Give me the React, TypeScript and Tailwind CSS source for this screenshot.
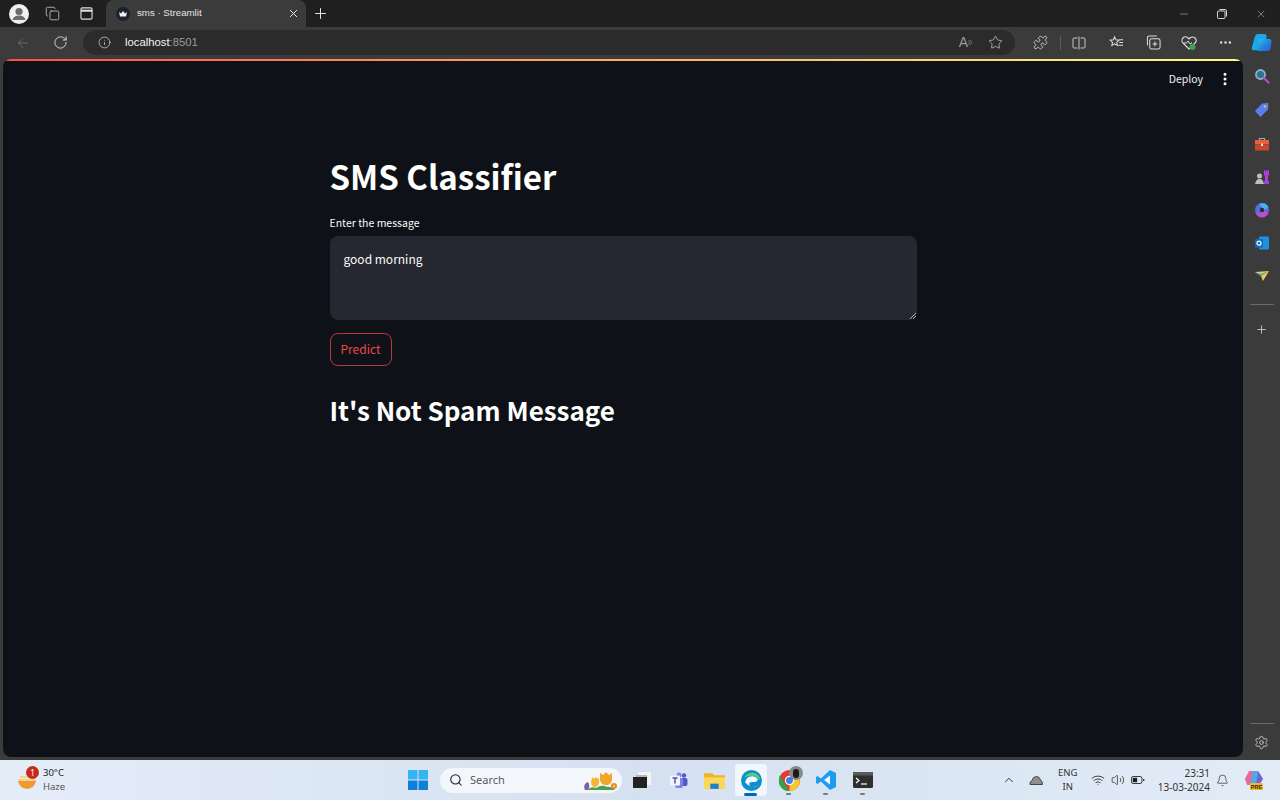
import {
  ArrowLeft,
  Bell,
  ChevronUp,
  Copy,
  Ellipsis,
  EllipsisVertical,
  Info,
  Minus,
  Plus,
  Puzzle,
  RotateCw,
  Search,
  Settings,
  Star,
  Volume2,
  Wifi,
  X,
} from 'lucide-react';

const streamlitFont = '[font-family:"Noto_Sans_CJK_SC","Source_Sans_Pro",sans-serif]';

function TabBar() {
  return (
    <div className="h-[27px] flex items-end bg-[#1f1f1f] text-[#e6e6e6]">
      <div className="h-[27px] w-[106px] flex items-center shrink-0">
        <div className="ml-[9px] w-5 h-5 rounded-full bg-[#f0f0f0] flex items-center justify-center overflow-hidden">
          <svg viewBox="0 0 20 20" className="w-5 h-5">
            <circle cx="10" cy="7.5" r="3.6" fill="#6b6b6b" />
            <path d="M3.5 16c1-3.6 3.6-4.6 6.5-4.6s5.500 1 6.500 4.600z" fill="#6b6b6b" />
          </svg>
        </div>
        <Copy className="ml-[16px] w-[15px] h-[15px] text-[#c8c8c8]" strokeWidth={1.3} />
        <svg viewBox="0 0 14 14" className="ml-[20px] w-[13px] h-[13px]" fill="none" stroke="#e0e0e0" strokeWidth="1.2">
          <rect x="1" y="1" width="12" height="12" rx="1.5" />
          <path d="M1 4h12" strokeWidth="2.200" />
        </svg>
      </div>
      <div className="h-[27px] w-[200px] bg-[#3b3b3b] rounded-t-lg flex items-center shrink-0">
        <div className="ml-[10px] w-[14px] h-[14px] rounded-full bg-[#1c2230] flex items-center justify-center">
          <svg viewBox="0 0 10 10" className="w-[10px] h-[10px]">
            <path d="M1 3l2 1.500L5 2l2 2.500L9 3 8 7.500H2z" fill="#f2f2f2" />
          </svg>
        </div>
        <span className="ml-[7px] flex-1 text-[9.7px] font-['Liberation_Sans',sans-serif]">sms · Streamlit</span>
        <X className="mr-[6px] w-[13px] h-[13px]" strokeWidth={1.800} />
      </div>
      <div className="h-[27px] flex items-center ml-[6px]">
        <Plus className="w-[17px] h-[17px]" strokeWidth={1.400} />
      </div>
      <div className="flex-1 h-[27px] flex items-center justify-end text-[#d8d8d8]">
        <Minus className="mr-[27px] w-[12px] h-[12px]" strokeWidth={1} />
        <svg viewBox="0 0 10 10" className="mr-[28px] w-[10px] h-[10px]" fill="none" stroke="#d8d8d8" strokeWidth="1">
          <rect x="0.500" y="2" width="7.500" height="7.500" rx="1" />
          <path d="M2.500 0.500h5.500a1.500 1.500 0 0 1 1.500 1.500v5.500" />
        </svg>
        <X className="mr-[13px] w-[12px] h-[12px]" strokeWidth={1} />
      </div>
    </div>
  );
}

function AddressBar() {
  return (
    <div className="h-[32px] pb-px flex items-center bg-[#3b3b3b] text-[#dcdcdc]">
      <ArrowLeft className="ml-[15px] w-[16px] h-[16px] text-[#6f6f6f]" strokeWidth={1.300} />
      <RotateCw className="ml-[22px] w-[15px] h-[15px]" strokeWidth={1.500} />
      <div className="ml-[15px] w-[932px] h-[25px] rounded-full bg-[#2b2b2b] flex items-center shrink-0">
        <Info className="ml-[15px] w-[13px] h-[13px]" strokeWidth={1.300} />
        <span className="ml-[14px] flex-1 text-[11.3px] font-['Liberation_Sans',sans-serif] text-[#f4f4f4]">
          localhost<span className="text-[#9a9a9a]">:8501</span>
        </span>
        <span className="mr-[2px] text-[14px] text-[#9b9b9b] font-['Liberation_Sans',sans-serif]">
          A<sup className="text-[6px]">))</sup>
        </span>
        <Star className="ml-[14px] mr-[12px] w-[15px] h-[15px] text-[#c8c8c8]" strokeWidth={1.200} />
      </div>
      <Puzzle className="ml-[18px] w-[15px] h-[15px]" strokeWidth={1.300} />
      <div className="ml-[12px] w-px h-[14px] bg-[#5c5c5c]" />
      <svg viewBox="0 0 14 14" className="ml-[11px] w-[14px] h-[14px]" fill="none" stroke="#c8c8c8" strokeWidth="1">
        <path d="M5.500 2H2a1 1 0 0 0-1 1v8a1 1 0 0 0 1 1h3.500M8.500 2H12a1 1 0 0 1 1 1v8a1 1 0 0 1-1 1H8.500M7 0.500v13" />
      </svg>
      <svg viewBox="0 0 16 16" className="ml-[23px] w-[15px] h-[15px]" fill="none" stroke="#dcdcdc" strokeWidth="1.100">
        <path d="M6 2l1.400 3.200 3.400.300-2.600 2.300.800 3.400L6 9.400 3 11.200l.800-3.400L1.200 5.500l3.400-.300zM11 5h4M11 8h4M10 11h5" />
      </svg>
      <svg viewBox="0 0 16 16" className="ml-[22px] w-[15px] h-[15px]" fill="none" stroke="#dcdcdc" strokeWidth="1.100">
        <rect x="4" y="4" width="11" height="11" rx="2" />
        <path d="M1.500 11V3a2 2 0 0 1 2-2h8M9.500 7v5M7 9.500h5" />
      </svg>
      <svg viewBox="0 0 16 16" className="ml-[20px] w-[16px] h-[16px]" fill="none">
        <path d="M8 14L2 8a3.500 3.500 0 0 1 5-5l1 1 1-1a3.500 3.500 0 0 1 5 5z" stroke="#dcdcdc" strokeWidth="1.100" />
        <path d="M3 8h2.500l1.500-2 2 3 1-1h1" stroke="#dcdcdc" strokeWidth="1" />
        <circle cx="11.500" cy="12" r="3" fill="#3fa34d" />
      </svg>
      <Ellipsis className="ml-[21px] w-[15px] h-[15px]" strokeWidth={2} />
      <svg viewBox="0 0 22 22" className="ml-[18px] w-[21px] h-[21px]">
        <defs>
          <linearGradient id="cop" x1="0" y1="0" x2="1" y2="1">
            <stop offset="0" stopColor="#35c1f1" />
            <stop offset="0.600" stopColor="#1f7fe0" />
            <stop offset="1" stopColor="#2a5fd8" />
          </linearGradient>
        </defs>
        <path d="M7 2h7q2 0 2.500 2l-3 12q-1 3-4 3H3q-3 0-2-3L4 5q.800-3 3-3z" fill="#1aa9e8" />
        <path d="M10 7h8q4 0 3.500 4l-1 6q-.800 3-4 3H9q-3 0-2.500-3l1-8q.500-2 2.500-2z" fill="url(#cop)" />
      </svg>
    </div>
  );
}

function SidebarIcons() {
  return (
    <div className="w-[37px] shrink-0 flex flex-col items-center bg-[#3b3b3b] text-[#d4d4d4]">
      <svg viewBox="0 0 16 16" className="mt-[9px] w-[16px] h-[16px]" fill="none">
        <circle cx="6.500" cy="6.500" r="4.500" stroke="#8fb4c8" strokeWidth="1.800" fill="#2f6f95" />
        <path d="M10 10l4.500 4.500" stroke="#b54bd6" strokeWidth="2.200" strokeLinecap="round" />
      </svg>
      <svg viewBox="0 0 16 16" className="mt-[18px] w-[16px] h-[16px]">
        <path d="M1 9l7-7.500 6.500-.500-.500 6.500L6.500 15z" fill="#5c7df0" />
        <circle cx="11" cy="4.500" r="1.300" fill="#d9c94a" />
      </svg>
      <svg viewBox="0 0 16 16" className="mt-[18px] w-[16px] h-[16px]">
        <path d="M5.500 4V2.500h5V4" fill="none" stroke="#a8a8a8" strokeWidth="1.200" />
        <rect x="1" y="4" width="14" height="4.500" fill="#e8603a" />
        <rect x="1" y="9" width="14" height="5.500" fill="#c9472a" />
        <rect x="7" y="7.500" width="2" height="2.500" fill="#f4d9c8" />
      </svg>
      <svg viewBox="0 0 16 16" className="mt-[17px] w-[16px] h-[16px]">
        <circle cx="5.500" cy="7" r="2.500" fill="#bdbdbd" />
        <path d="M1 15q0-3 3-5h3q3 2 3 5z" fill="#bdbdbd" />
        <path d="M10 1h1v1h1V1h1v1h1V1h1v5l-1 1v5h1v3H10v-3h1V7l-1-1z" fill="#a83fd8" />
      </svg>
      <svg viewBox="0 0 16 16" className="mt-[17px] w-[16px] h-[16px]">
        <circle cx="8" cy="8" r="7" fill="#5a6de0" />
        <path d="M8 1a7 7 0 0 1 6.500 4.500L10 8 5 2z" fill="#3fb4e8" />
        <path d="M2 12a7 7 0 0 0 12 0l-3-4-5 3z" fill="#b84fd0" />
        <circle cx="8" cy="8" r="2.300" fill="#2c2c4a" />
      </svg>
      <svg viewBox="0 0 16 16" className="mt-[17px] w-[16px] h-[16px]">
        <rect x="5" y="1.500" width="10" height="13" rx="1" fill="#1f8fe0" />
        <rect x="1" y="4" width="8" height="8.500" rx="1" fill="#0f6cbd" />
        <circle cx="5" cy="8.200" r="2" fill="none" stroke="#fff" strokeWidth="1.200" />
      </svg>
      <svg viewBox="0 0 16 16" className="mt-[17px] w-[16px] h-[16px]">
        <path d="M1 4l14-1-6 10-2-5z" fill="#f2c94c" />
        <path d="M1 4l6 4 8-5-8 3z" fill="#36a3c9" />
      </svg>
      <div className="mt-[20px] w-[24px] h-px bg-[#6a6a6a]" />
      <Plus className="mt-[18px] w-[13px] h-[13px]" strokeWidth={1.500} />
      <div className="mt-auto w-[24px] h-px bg-[#6a6a6a]" />
      <Settings className="mt-[11px] mb-[10px] w-[15px] h-[15px]" strokeWidth={1.300} />
    </div>
  );
}

function StreamlitPage() {
  return (
    <div className={`flex-1 flex flex-col ml-[3px] mb-[3px] rounded-lg overflow-hidden bg-[#0e1117] text-white ${streamlitFont}`}>
      <div className="h-[2px] bg-gradient-to-r from-[#ff4b4b] to-[#fffd80] shrink-0" />
      <div className="h-[36px] flex items-center justify-end shrink-0">
        <span className="text-[10.5px] text-[#f0f2f6]">Deploy</span>
        <EllipsisVertical className="ml-[14px] mr-[10px] w-[16px] h-[16px]" strokeWidth={2.500} />
      </div>
      <div className="w-[587px] mx-auto pt-[57px]">
        <h1 className="text-[33px] leading-[44px] font-bold">SMS Classifier</h1>
        <label className="block mt-[16px] text-[10.5px] leading-[18px] text-[#fafafa]">Enter the message</label>
        <div className="mt-[4px] relative h-[84px] rounded-lg bg-[#262730] px-[14px] pt-[12px] text-[12px] leading-[22px] text-[#fafafa]">
          good morning
          <svg viewBox="0 0 6 6" className="absolute right-px bottom-px w-[6px] h-[6px]" stroke="#b0b0b0" strokeWidth="1">
            <path d="M0 6L6 0M3 6l3-3" />
          </svg>
        </div>
        <button className="mt-[13px] block w-[62px] h-[33px] pb-[2px] rounded-lg border border-[#ff4b4b]/70 text-[12px] text-[#f04848]">
          Predict
        </button>
        <h2 className="mt-[26px] text-[26px] leading-[36px] font-semibold">It's Not Spam Message</h2>
      </div>
    </div>
  );
}

function TaskbarApps() {
  return (
    <div className="flex items-center">
      <svg viewBox="0 0 20 20" className="w-[20px] h-[20px]">
        <rect x="0" y="0" width="9.500" height="9.500" fill="#35b5f0" />
        <rect x="10.500" y="0" width="9.500" height="9.500" fill="#35b5f0" />
        <rect x="0" y="10.500" width="9.500" height="9.500" fill="#0f7fd8" />
        <rect x="10.500" y="10.500" width="9.500" height="9.500" fill="#0f7fd8" />
      </svg>
      <div className="ml-[12px] w-[182px] h-[25px] rounded-full bg-[#f3f7fc] flex items-center">
        <Search className="ml-[9px] w-[14px] h-[14px] text-[#1b1b1b]" strokeWidth={1.800} />
        <span className="ml-[7px] flex-1 text-[11px] text-[#5a5a5a] font-['Noto_Sans',sans-serif]">Search</span>
        <svg viewBox="0 0 40 22" className="w-[40px] h-[22px] mr-px">
          <path d="M4 21q-2-4 1-7l2-1 1 2q1 3-1 6z" fill="#7a5ea8" />
          <path d="M11 8l2 2 2-2 2 2 1-1v5q-1 4-4 4t-4-4z" fill="#f2b632" />
          <path d="M19 4l3 2 3-3 3 3 3-2v7q-1 5-6 5t-6-5z" fill="#f4a62a" />
          <path d="M6 21q4-4 9-2 6-4 11-1 4-1 8 3z" fill="#4f9e4a" />
          <circle cx="33" cy="17" r="3" fill="#e88a2a" />
          <circle cx="33" cy="17" r="1" fill="#f7e27a" />
        </svg>
      </div>
      <svg viewBox="0 0 20 20" className="ml-[10px] w-[20px] h-[20px]">
        <rect x="6" y="2" width="13" height="13" fill="#f4f4f4" />
        <rect x="4" y="5" width="11" height="11" fill="#b8b8b8" />
        <rect x="1" y="7" width="14" height="11" fill="#222222" />
      </svg>
      <svg viewBox="0 0 20 20" className="ml-[17px] w-[20px] h-[20px]">
        <circle cx="15" cy="5.500" r="2.200" fill="#5059c9" />
        <rect x="12" y="8" width="6.500" height="8" rx="2" fill="#5059c9" />
        <circle cx="10" cy="5" r="2.500" fill="#7b83eb" />
        <rect x="6" y="8" width="8" height="10" rx="2" fill="#7b83eb" />
        <rect x="1" y="5.500" width="10" height="10" rx="1" fill="#f5f5f5" />
        <path d="M3.500 8h5M6 8v5.500" stroke="#4b53bc" strokeWidth="1.500" />
      </svg>
      <svg viewBox="0 0 20 20" className="ml-[15px] w-[21px] h-[21px]">
        <path d="M0 3h8l2 2h10v13H0z" fill="#f0b429" />
        <path d="M0 7h20v11H0z" fill="#fbd75b" />
        <rect x="6" y="13" width="8" height="5" fill="#1f7fd0" />
      </svg>
      <div className="ml-[10px] w-[32px] h-[32px] rounded bg-[#f2f7fd] relative flex items-center justify-center">
        <svg viewBox="0 0 20 20" className="w-[21px] h-[21px]">
          <circle cx="10" cy="10" r="10" fill="#0f8fd0" />
          <path d="M4 12a6.500 6.500 0 0 1 12-3c0 2-2 2.500-4.500 2.500-3 0-4.500 1-3 3.500 1 1.500 5 1.500 8-.500A9.500 9.500 0 0 1 4 12z" fill="#f4f9fd" />
          <path d="M3 8a8 8 0 0 1 14-2c1 1 1.500 3 .500 3.500C15 5 7 4 3 8z" fill="#53d07a" />
        </svg>
        <div className="absolute bottom-0 left-[9px] w-[13px] h-[3px] rounded-full bg-[#0067c0]" />
      </div>
      <div className="ml-[6px] relative w-[32px] h-[32px] flex items-center justify-center">
        <svg viewBox="0 0 20 20" className="w-[21px] h-[21px]">
          <circle cx="10" cy="10" r="10" fill="#e33b2e" />
          <path d="M10 20a10 10 0 0 0 9-14H10z" fill="#f7c52d" />
          <path d="M1 5l5 9 4 6a10 10 0 0 1-9-15z" fill="#2ea44f" />
          <circle cx="10" cy="10" r="4.500" fill="#fff" />
          <circle cx="10" cy="10" r="3.300" fill="#3b82e8" />
        </svg>
        <div className="absolute top-[2px] right-[2px] w-[14px] h-[14px] rounded-full bg-[#8a8a8a] flex items-center justify-center">
          <div className="w-[6px] h-[9px] rounded-sm bg-[#1c1c1c]" />
        </div>
        <div className="absolute bottom-[1px] left-[13px] w-[5px] h-[2px] rounded-full bg-[#7a7a7a]" />
      </div>
      <div className="ml-[5px] relative w-[32px] h-[32px] flex items-center justify-center">
        <svg viewBox="0 0 20 20" className="w-[20px] h-[20px]">
          <path d="M14 0l6 3v14l-6 3L5 11.500 1.500 14 0 13V7l1.500-1L5 8.500z" fill="#1f9cf0" />
          <path d="M14 5.500L8 10l6 4.500z" fill="#f2f7fd" />
        </svg>
        <div className="absolute bottom-[1px] left-[13px] w-[5px] h-[2px] rounded-full bg-[#7a7a7a]" />
      </div>
      <div className="ml-[5px] relative w-[32px] h-[32px] flex items-center justify-center">
        <svg viewBox="0 0 20 16" className="w-[20px] h-[16px]">
          <rect x="0" y="0" width="20" height="16" rx="1.500" fill="#2f2f2f" />
          <rect x="0" y="0" width="20" height="3.500" fill="#5a5a5a" />
          <path d="M3 6l3 2.500L3 11" fill="none" stroke="#fff" strokeWidth="1.200" />
          <path d="M8 12h6" stroke="#fff" strokeWidth="1.200" />
        </svg>
        <div className="absolute bottom-[1px] left-[13px] w-[5px] h-[2px] rounded-full bg-[#7a7a7a]" />
      </div>
    </div>
  );
}

function Taskbar() {
  return (
    <div className="h-[40px] shrink-0 flex items-center bg-gradient-to-r from-[#e4edf8] via-[#d5e1f1] to-[#e2ecf7] text-[#1b1b1b] font-['Noto_Sans',sans-serif] relative">
      <div className="w-[408px] flex items-center shrink-0">
        <div className="ml-[17px] relative w-[20px] h-[20px]">
          <svg viewBox="0 0 20 20" className="w-[20px] h-[20px]">
            <path d="M1 10a9 9 0 0 0 18 0z" fill="#ef9a2e" />
            <path d="M3 6h13v2H3zM1 9h17v2H1z" fill="#f7d58a" />
          </svg>
          <div className="absolute -top-[4px] left-[9px] w-[13px] h-[13px] rounded-full bg-[#c42b1c] text-white text-[8px] leading-[13px] text-center">
            1
          </div>
        </div>
        <div className="ml-[6px] text-[9.5px] leading-[14px]">
          <div>30°C</div>
          <div className="text-[#555555]">Haze</div>
        </div>
      </div>
      <TaskbarApps />
      <div className="ml-auto flex items-center text-[9.5px]">
        <ChevronUp className="w-[14px] h-[14px]" strokeWidth={1.500} />
        <svg viewBox="0 0 14 10" className="ml-[13px] w-[14px] h-[10px]" fill="#8f8f8f" stroke="#3a3a3a" strokeWidth="0.900">
          <path d="M1 9.500q-.500-3 2-4 1-4 4.500-4 3 0 4 3.500 2 .500 2 4.500z" />
        </svg>
        <div className="ml-[15px] w-[20px] text-center leading-[14px] text-[#333333]">
          <div>ENG</div>
          <div>IN</div>
        </div>
        <Wifi className="ml-[13px] w-[14px] h-[14px]" strokeWidth={1.400} />
        <Volume2 className="ml-[6px] w-[14px] h-[14px]" strokeWidth={1.200} />
        <svg viewBox="0 0 16 10" className="ml-[6px] w-[14px] h-[10px]" fill="none" stroke="#1b1b1b" strokeWidth="1">
          <rect x="0.500" y="1" width="12" height="8" rx="2" />
          <rect x="2" y="2.500" width="5" height="5" fill="#1b1b1b" stroke="none" />
          <path d="M14.500 4v2" strokeWidth="1.500" />
        </svg>
        <div className="ml-[13px] text-right text-[10px] leading-[14px] text-[#333333]">
          <div>23:31</div>
          <div>13-03-2024</div>
        </div>
        <Bell className="ml-[6px] w-[13px] h-[13px]" strokeWidth={1.200} />
        <svg viewBox="0 0 20 20" className="ml-[15px] mr-[16px] w-[20px] h-[20px]">
          <path d="M6 1h8l5 8-4 6H5L1 9z" fill="#45b0e8" />
          <path d="M1 9l4-8h4L6 15H3z" fill="#e96a9a" />
          <path d="M14 1l5 8-4 6h-3z" fill="#7a5fd8" />
          <rect x="6" y="13" width="13" height="7" rx="1" fill="#f2b632" />
          <text x="12.500" y="18.800" fontSize="5.500" fontWeight="700" textAnchor="middle" fill="#3a2a00" fontFamily="Liberation Sans">PRE</text>
        </svg>
      </div>
    </div>
  );
}

export default function App() {
  return (
    <div className="w-[1280px] h-[800px] flex flex-col overflow-hidden bg-[#3b3b3b]">
      <TabBar />
      <AddressBar />
      <div className="flex-1 flex min-h-0">
        <StreamlitPage />
        <SidebarIcons />
      </div>
      <Taskbar />
    </div>
  );
}
